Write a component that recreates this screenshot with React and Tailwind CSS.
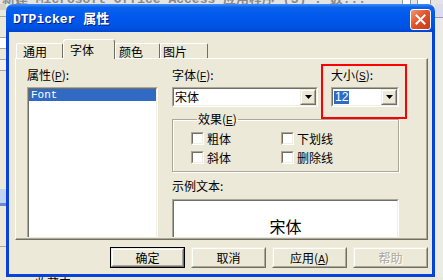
import React from 'react'

const cjk = "font-['Noto_Sans_CJK_SC','Liberation_Sans',sans-serif]"

function Sunken({ className = '', inner = 'bg-white', children }) {
  return (
    <div className={`border border-t-[#aca899] border-l-[#aca899] border-r-white border-b-white ${className}`}>
      <div className={`h-full border border-t-[#716f64] border-l-[#716f64] border-r-[#f1efe2] border-b-[#f1efe2] ${inner}`}>
        {children}
      </div>
    </div>
  )
}

function Raised({ className = '', children }) {
  return (
    <div className={`border border-t-[#f1efe2] border-l-[#f1efe2] border-r-[#716f64] border-b-[#716f64] bg-[#ece9d8] ${className}`}>
      <div className="flex h-full items-center justify-center border border-t-white border-l-white border-r-[#aca899] border-b-[#aca899]">
        {children}
      </div>
    </div>
  )
}

function Combo({ width, children }) {
  return (
    <Sunken className={`${width} h-[20px]`}>
      <div className="flex h-full items-center">
        <div className="flex flex-1 items-center pl-[1px] text-[12px] leading-[14px]">{children}</div>
        <Raised className="h-[16px] w-[16px]">
          <svg width="7" height="4" viewBox="0 0 7 4">
            <polygon points="0,0 7,0 3.5,4" fill="#000" />
          </svg>
        </Raised>
      </div>
    </Sunken>
  )
}

function Check({ label }) {
  return (
    <div className="flex h-[13px] items-center gap-[3px]">
      <Sunken className="h-[13px] w-[13px]" />
      <span className="text-[12px] leading-[14px]">{label}</span>
    </div>
  )
}

function Key({ k }) {
  return <span className="font-['Liberation_Sans',sans-serif] text-[10px] leading-[10px] underline">{k}</span>
}

function Button({ children, isDefault, disabled }) {
  const body = (
    <Raised className="h-full w-full">
      <span className={`text-[12px] leading-[14px] ${disabled ? 'text-[#aca899] [text-shadow:1px_1px_0_white]' : 'text-black'}`}>
        {children}
      </span>
    </Raised>
  )
  if (isDefault) {
    return <div className="h-[21px] w-[75px] border border-black">{body}</div>
  }
  return <div className="h-[21px] w-[75px]">{body}</div>
}

function Tab({ label, selected, width, pad }) {
  if (selected) {
    return (
      <div className={`${width} ${pad} h-[20px] rounded-t-[3px] border-l border-t border-r border-l-white border-t-white border-r-[#716f64] bg-[#ece9d8] pt-[3px] text-[12px] leading-[14px]`}>
        {label}
      </div>
    )
  }
  return (
    <div className={`${width} ${pad} mb-[1px] h-[15px] rounded-t-[2px] border-l border-t border-r border-l-white border-t-white border-r-[#716f64] pt-[1px] text-[12px] leading-[13px]`}>
      {label}
    </div>
  )
}

function Dialog() {
  return (
    <div className="flex w-[429px] flex-col overflow-hidden rounded-t-[7px]">
      <div className="flex h-[28px] items-start justify-between bg-[linear-gradient(to_bottom,#3d8ff7_0%,#0a62ea_12%,#0058ee_45%,#0053e2_85%,#0044d0_100%)] pl-[7px] pr-[4px]">
        <span className="mt-[9px] font-['Liberation_Mono','Noto_Sans_CJK_SC',monospace] text-[13px] font-bold leading-[14px] text-white [text-shadow:1px_1px_0_#0a1c7a]">
          DTPicker 属性
        </span>
        <div className="mt-[5px] flex h-[21px] w-[21px] items-center justify-center rounded-[3px] border border-white bg-[linear-gradient(135deg,#f39a7a_0%,#e2552c_45%,#c7391a_100%)]">
          <svg width="11" height="11" viewBox="0 0 11 11">
            <path d="M1.5 1.5 L9.5 9.5 M9.5 1.5 L1.5 9.5" stroke="#fff" strokeWidth="2" strokeLinecap="square" />
          </svg>
        </div>
      </div>

      <div className={`flex flex-1 flex-col border-x-[3px] border-b-[3px] border-[#0842dc] bg-[#ece9d8] pl-[6px] pr-[4px] pt-[7px] ${cjk}`}>
        <div className="relative z-10 -mb-[1px] ml-[1px] flex h-[20px] items-end">
          <Tab label="通用" width="w-[47px]" pad="pl-[6px]" />
          <Tab label="字体" width="w-[52px]" pad="pl-[6px]" selected />
          <Tab label="颜色" width="w-[45px]" pad="pl-[3px]" />
          <Tab label="图片" width="w-[48px]" pad="pl-[2px]" />
        </div>

        <div className="h-[182px] w-[413px] border border-l-white border-t-white border-r-[#716f64] border-b-[#716f64] shadow-[inset_-1px_-1px_0_#aca899]">
          <div className="flex h-[178px] overflow-hidden pl-[11px] pt-[9px]">
            <div className="flex w-[131px] flex-col">
              <div className="h-[14px] text-[12px] leading-[14px]">
                属性(<Key k="P" />):
              </div>
              <Sunken className="mt-[5px] h-[220px] shrink-0">
                <div className="flex h-[12px] items-center bg-[#316ac5] pl-[2px] font-['Liberation_Mono',monospace] text-[11px] leading-[12px] text-white">
                  Font
                </div>
              </Sunken>
            </div>

            <div className="relative ml-[14px] flex w-[227px] flex-col">
              <div className="flex gap-[13px]">
                <div className="flex w-[146px] flex-col">
                  <div className="h-[14px] text-[12px] leading-[14px]">
                    字体(<Key k="F" />):
                  </div>
                  <div className="mt-[5px]">
                    <Combo width="w-[146px]">宋体</Combo>
                  </div>
                </div>
                <div className="flex w-[68px] flex-col">
                  <div className="h-[14px] text-[12px] leading-[14px]">
                    大小(<Key k="S" />):
                  </div>
                  <div className="mt-[5px]">
                    <Combo width="w-[68px]">
                      <span className="bg-[#316ac5] px-[1px] font-['Liberation_Sans',sans-serif] text-[12px] leading-[13px] text-white">12</span>
                    </Combo>
                  </div>
                </div>
              </div>

              <div className="pointer-events-none absolute -top-[4px] left-[149px] h-[55px] w-[86px] border-2 border-[#ff0000]" />

              <fieldset className="mt-[5px] border border-[#aca899] pb-[7px] pl-[18px] pt-[6px] shadow-[1px_1px_0_white,inset_1px_1px_0_white]">
                <legend className="ml-[6px] h-[14px] px-[1px] text-[12px] leading-[14px]">
                  效果(<Key k="E" />)
                </legend>
                <div className="grid grid-cols-[90px_1fr] gap-y-[6px]">
                  <Check label="粗体" />
                  <Check label="下划线" />
                  <Check label="斜体" />
                  <Check label="删除线" />
                </div>
              </fieldset>

              <div className="mt-[7px] h-[14px] text-[12px] leading-[14px]">示例文本:</div>
              <Sunken className="mt-[6px] h-[80px] shrink-0">
                <div className="pt-[15px] text-center text-[16px] leading-[20px]">宋体</div>
              </Sunken>
            </div>
          </div>
        </div>

        <div className="mt-[7px] flex justify-end gap-[6px]">
          <Button isDefault>确定</Button>
          <Button>取消</Button>
          <Button>
            应用(<Key k="A" />)
          </Button>
          <Button disabled>帮助</Button>
        </div>
      </div>
    </div>
  )
}

export default function App() {
  return (
    <div className="flex h-[280px] w-[443px] flex-col overflow-hidden bg-[#ece9d8]">
      <div className="flex h-[4px] shrink-0 items-end overflow-hidden bg-[#e4e4e4]">
        <div className="-mb-[3px] flex flex-1 items-end justify-between pl-[2px] pr-[12px]">
          <span className="whitespace-nowrap font-['Liberation_Mono','Noto_Sans_CJK_SC',monospace] text-[13px] font-bold leading-[14px] text-[#8a8a8a]">
            新建 Microsoft Office Access 应用程序 (3) : 数...
          </span>
          <div className="flex gap-[6px]">
            <div className="h-[8px] w-[9px] border border-[#9a9a9a] bg-white" />
            <div className="h-[8px] w-[14px] border border-[#9a9a9a] bg-white" />
          </div>
        </div>
      </div>

      <div className="flex h-[273px] shrink-0">
        <div className="flex w-[6px] flex-col bg-[#ece9d8]">
          <div className="h-[6px] bg-[#d6d3c6]" />
          <div className="mt-[6px] h-[1px] bg-[#aca899]" />
          <div className="mt-[20px] h-[12px] border-y border-[#aca899] bg-white" />
          <div className="mt-[10px] h-[12px] border-y border-[#aca899] bg-[#f4f3ee]" />
          <div className="mt-[118px] h-[14px] bg-[#c2d3f0]" />
          <div className="h-[3px] bg-[#6b86d6]" />
          <div className="mt-[40px] h-[1px] bg-[#aca899]" />
        </div>
        <Dialog />
        <div className="flex flex-1 flex-col bg-[#ecebe6]">
          <div className="h-[14px] border-b border-[#9a9ab8] bg-[#dcdcec]" />
        </div>
      </div>

      <div className={`flex h-[3px] shrink-0 items-start overflow-hidden bg-[#ece9d8] pl-[35px] ${cjk}`}>
        <span className="text-[12px] leading-[12px] text-black">收藏夹</span>
      </div>
    </div>
  )
}
